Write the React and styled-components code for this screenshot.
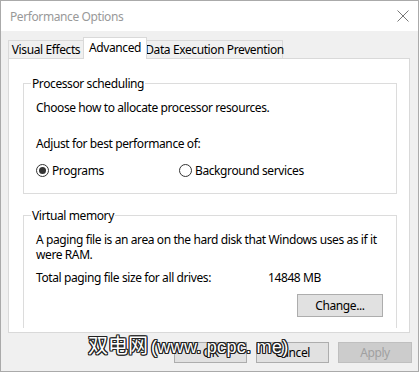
import React from "react";
import styled, { createGlobalStyle } from "styled-components";

const GlobalStyle = createGlobalStyle`
    html, body {
        margin: 0;
        padding: 0;
        background: #ffffff;
    }

    body {
        font-family: "Segoe UI", "Noto Sans", "Liberation Sans", sans-serif;
        font-size: 12px;
        letter-spacing: -0.4px;
        color: #000;
    }
`;

const Window = styled.div`
    position: relative;
    box-sizing: border-box;
    width: 419px;
    height: 372px;
    border: 1px solid #aaaaaa;
    background: #f0f0f0;
    display: flex;
    flex-direction: column;
    overflow: hidden;
`;

const TitleBar = styled.div`
    height: 30px;
    flex-shrink: 0;
    background: #ffffff;
    display: flex;
    align-items: center;
    justify-content: space-between;
    padding: 0 9px 0 9px;
    color: #999999;
    line-height: 15px;
`;

const CloseIcon = styled.svg`
    width: 12px;
    height: 12px;
`;

const Body = styled.div`
    padding: 6px 8px 0 7px;
    display: flex;
    flex-direction: column;
`;

const TabRow = styled.div`
    display: flex;
    align-items: flex-end;
    height: 21px;
`;

const Tab = styled.div`
    position: relative;
    box-sizing: border-box;
    width: ${(p) => p.$w}px;
    height: ${(p) => (p.$active ? 22 : 18)}px;
    margin-left: ${(p) => (p.$first ? 0 : -1)}px;
    margin-bottom: ${(p) => (p.$active ? -1 : 0)}px;
    z-index: ${(p) => (p.$active ? 1 : 0)};
    border: 1px solid #d9d9d9;
    border-bottom: none;
    background: ${(p) => (p.$active ? "#ffffff" : "#f0f0f0")};
    display: flex;
    align-items: center;
    justify-content: center;
    padding-bottom: ${(p) => (p.$active ? 3 : 0)}px;
    line-height: 15px;
    white-space: nowrap;
`;

const Panel = styled.div`
    box-sizing: border-box;
    height: 275px;
    background: #ffffff;
    border: 1px solid #d9d9d9;
    padding: 17px 12px 0 14px;
    overflow: hidden;
`;

const Group = styled.fieldset`
    margin: ${(p) => (p.$first ? 0 : "14px")} 0 0 0;
    padding: 9px 10px ${(p) => p.$bottom}px 12px;
    border: 1px solid #dcdcdc;
    border-bottom: ${(p) => (p.$open ? "none" : "1px solid #dcdcdc")};
    min-width: 0;
    line-height: 15px;

    legend {
        margin-left: -5px;
        padding: 0 1px;
    }
`;

const Text = styled.p`
    margin: ${(p) => p.$top || 0}px 0 0 0;
`;

const RadioRow = styled.div`
    display: grid;
    grid-template-columns: 143px auto;
    margin-top: 12px;
`;

const RadioLabel = styled.label`
    display: flex;
    align-items: center;
    gap: 3px;
`;

const RadioDot = styled.span`
    box-sizing: border-box;
    width: 13px;
    height: 13px;
    border-radius: 50%;
    border: 1px solid #333333;
    display: flex;
    align-items: center;
    justify-content: center;

    &::after {
        content: "";
        width: 7px;
        height: 7px;
        border-radius: 50%;
        background: ${(p) => (p.$checked ? "#333333" : "transparent")};
    }
`;

const InfoRow = styled.div`
    display: grid;
    grid-template-columns: 232px auto;
    margin-top: 8px;
`;

const ButtonLine = styled.div`
    display: flex;
    justify-content: flex-end;
    margin-top: ${(p) => p.$top}px;
    margin-right: ${(p) => p.$edge || 0}px;
    gap: 9px;
`;

const Button = styled.button`
    box-sizing: border-box;
    width: ${(p) => p.$w}px;
    height: ${(p) => p.$h}px;
    padding: 0;
    font: inherit;
    letter-spacing: inherit;
    line-height: 15px;
    background: ${(p) => (p.disabled ? "#cccccc" : "#e1e1e1")};
    border: 1px solid ${(p) => (p.disabled ? "#bfbfbf" : "#adadad")};
    color: ${(p) => (p.disabled ? "#a0a0a0" : "#000000")};
    border-radius: 0;
`;

const Watermark = styled.div`
    position: absolute;
    left: 87px;
    top: 331px;
    display: flex;
    align-items: baseline;
    gap: 3px;
    line-height: 26px;
    color: #ffffff;
    white-space: nowrap;
    text-shadow: -1px 0 #222, 1px 0 #222, 0 -1px #222, 0 1px #222,
        -1px -1px #222, 1px 1px #222, -1px 1px #222, 1px -1px #222;
    pointer-events: none;
`;

const MarkPart = styled.span`
    font-family: ${(p) => (p.$cjk ? "'Noto Sans CJK SC'" : "'Liberation Sans'")},
        sans-serif;
    font-size: ${(p) => (p.$cjk ? 20 : 18)}px;
    letter-spacing: ${(p) => (p.$cjk ? 0 : 0.3)}px;
`;

function Radio({ checked, children }) {
    return (
        <RadioLabel>
            <RadioDot $checked={checked} />
            {children}
        </RadioLabel>
    );
}

export default function App() {
    return (
        <>
            <GlobalStyle />
            <Window>
                <TitleBar>
                    <span>Performance Options</span>
                    <CloseIcon viewBox="0 0 12 12">
                        <path
                            d="M0.5 0.5 L11.5 11.5 M11.5 0.5 L0.5 11.5"
                            stroke="#777"
                            strokeWidth="1"
                        />
                    </CloseIcon>
                </TitleBar>
                <Body>
                    <TabRow>
                        <Tab $first $w={76}>
                            Visual Effects
                        </Tab>
                        <Tab $active $w={64}>
                            Advanced
                        </Tab>
                        <Tab $w={137}>Data Execution Prevention</Tab>
                    </TabRow>
                    <Panel>
                        <Group $first $bottom={15}>
                            <legend>Processor scheduling</legend>
                            <Text>Choose how to allocate processor resources.</Text>
                            <Text $top={21}>Adjust for best performance of:</Text>
                            <RadioRow>
                                <Radio checked>Programs</Radio>
                                <Radio>Background services</Radio>
                            </RadioRow>
                        </Group>
                        <Group $open $bottom={11}>
                            <legend>Virtual memory</legend>
                            <Text>
                                A paging file is an area on the hard disk that Windows uses as if it
                                <br />
                                were RAM.
                            </Text>
                            <InfoRow>
                                <span>Total paging file size for all drives:</span>
                                <span>14848 MB</span>
                            </InfoRow>
                            <ButtonLine $top={9} $edge={3}>
                                <Button $w={86} $h={23}>
                                    Change...
                                </Button>
                            </ButtonLine>
                        </Group>
                    </Panel>
                    <ButtonLine $top={9} $edge={-2}>
                        <Button $w={73} $h={21}>
                            OK
                        </Button>
                        <Button $w={73} $h={21}>
                            Cancel
                        </Button>
                        <Button $w={74} $h={21} disabled>
                            Apply
                        </Button>
                    </ButtonLine>
                </Body>
                <Watermark>
                    <MarkPart $cjk>双电网</MarkPart>
                    <MarkPart>(www. pcpc. me)</MarkPart>
                </Watermark>
            </Window>
        </>
    );
}
